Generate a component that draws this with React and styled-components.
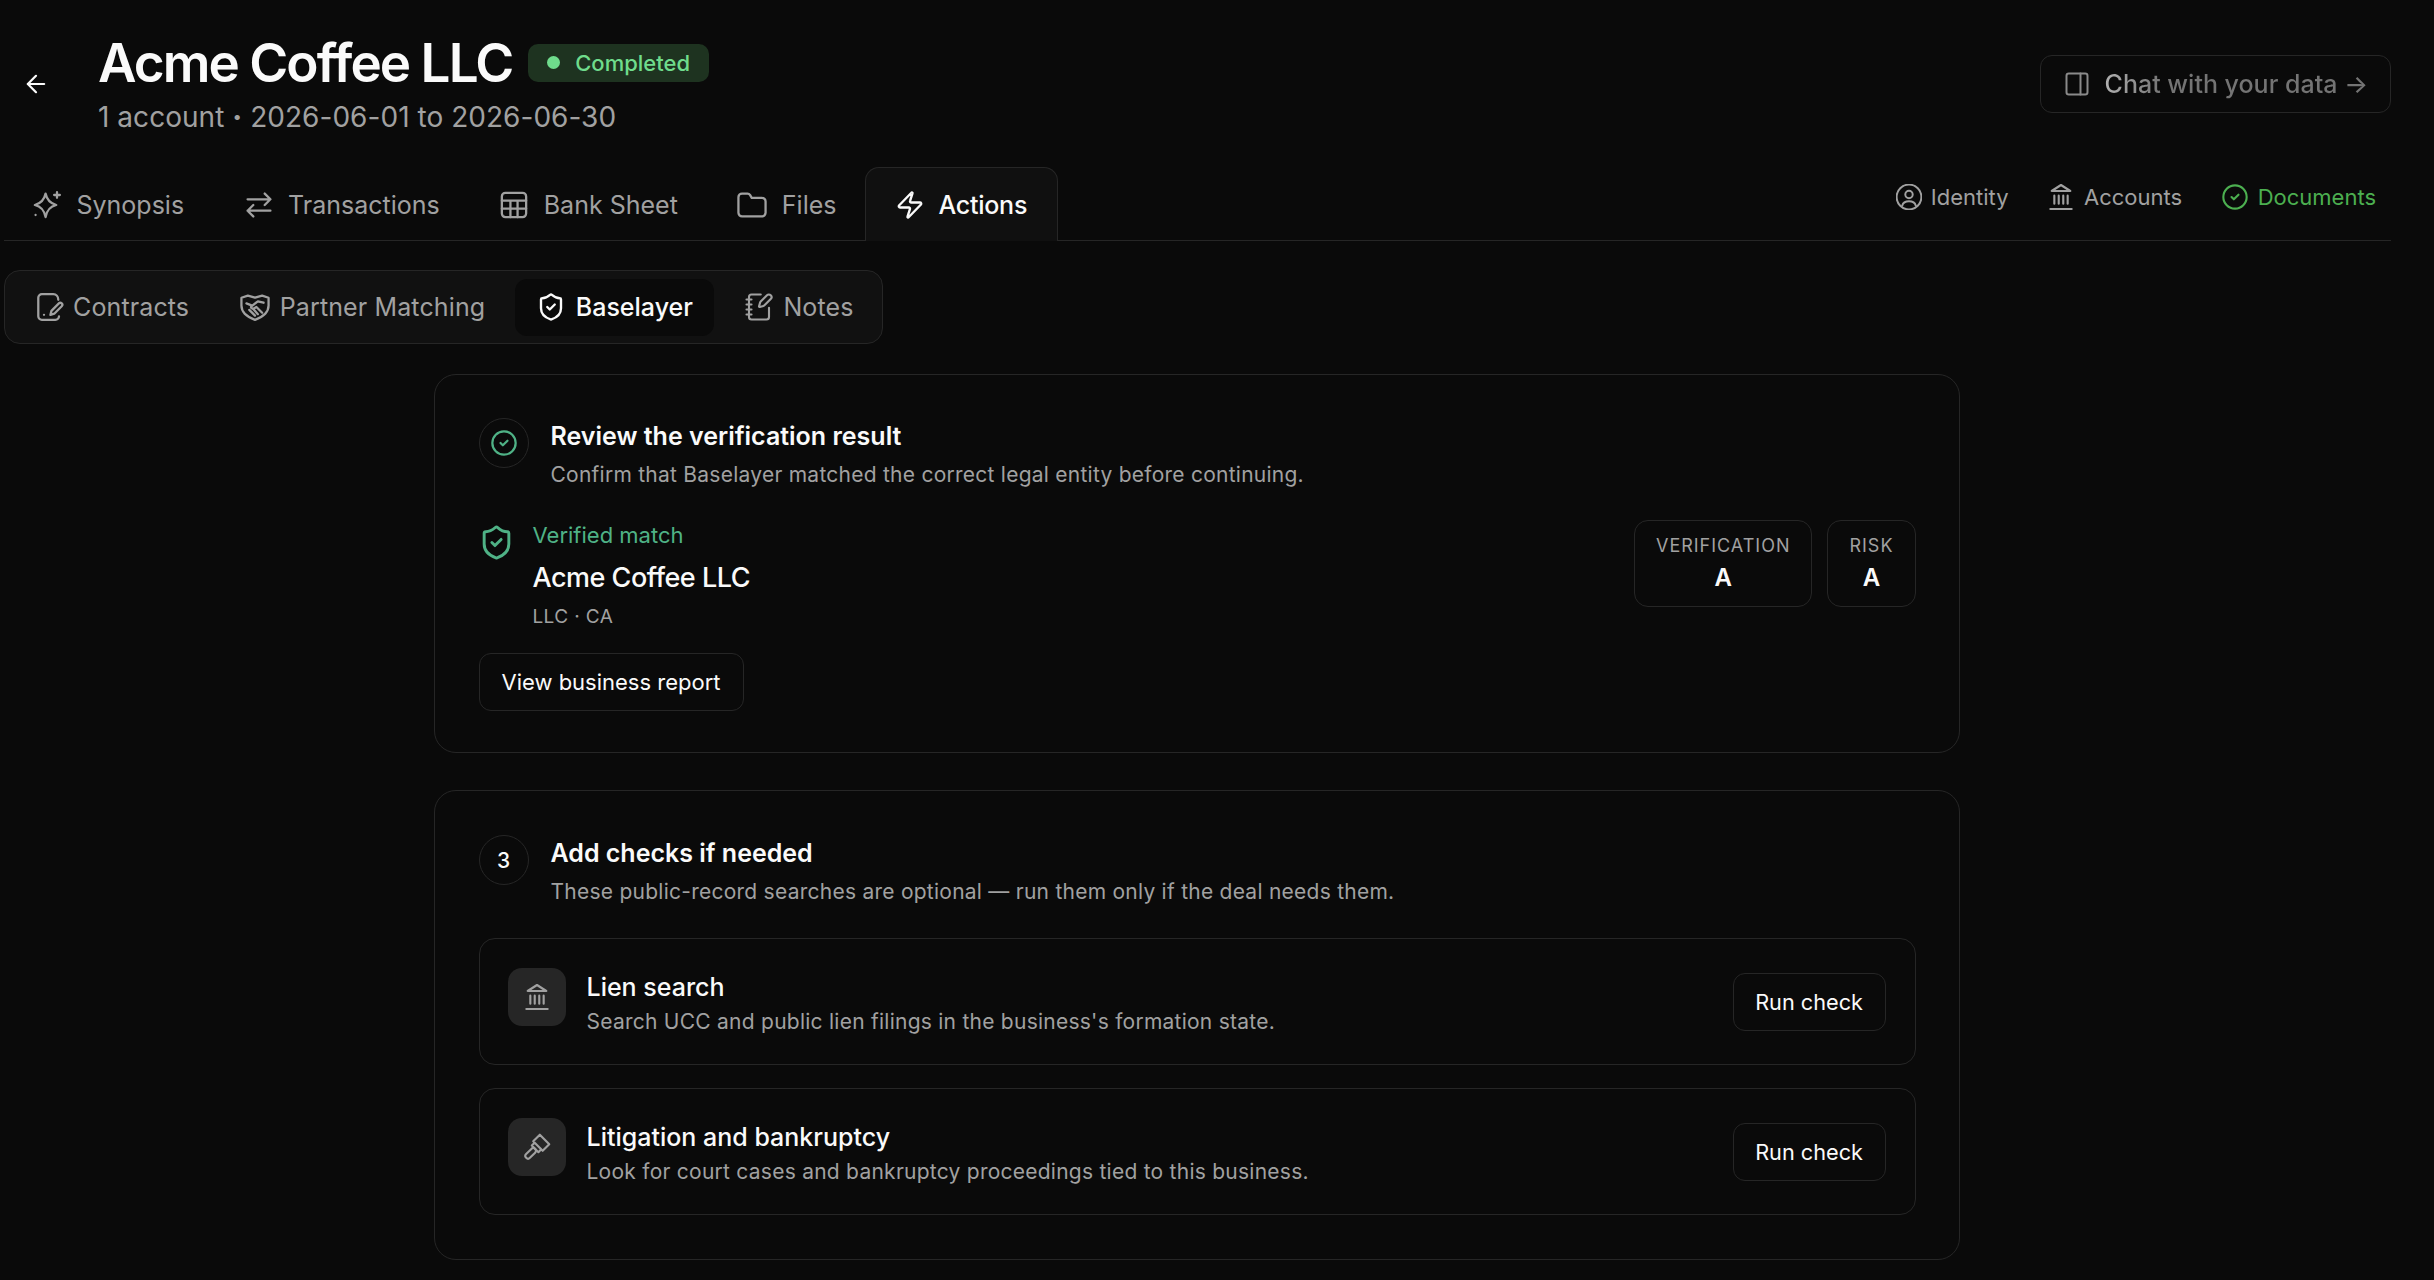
import React from 'react';
import styled, { createGlobalStyle } from 'styled-components';
import { ArrowLeft, Zap, PanelRight, NotebookPen, ShieldCheck, CircleCheck } from 'lucide-react';

const GlobalStyle = createGlobalStyle`
  html, body {
    margin: 0;
    background: #0a0a0a;
    color: #fafafa;
    font-family: Inter, "Noto Sans", sans-serif;
  }
  * { box-sizing: border-box; }
`;

const Svg = styled.svg`
  flex: none;
  fill: none;
  stroke: currentColor;
  stroke-width: 1.6;
  stroke-linecap: round;
  stroke-linejoin: round;
`;

const Icon = ({ size = 30, children }) => (
  <Svg width={size} height={size} viewBox="1.5 1.5 21 21">{children}</Svg>
);

const SparkIcon = (p) => (
  <Icon {...p}>
    <path d="M11 4c.9 4.4 3 6.9 7.5 8-4.5 1-6.6 3.5-7.5 8.5-.9-5-3-7.5-7.5-8.5 4.5-1.1 6.6-3.6 7.5-8z" />
    <path d="M19 3v4M17 5h4M4 19h.01" />
  </Icon>
);
const SwapIcon = (p) => (
  <Icon {...p}>
    <path d="M4 8h16M16 4l4 4-4 4M20 16H4M8 12l-4 4 4 4" />
  </Icon>
);
const TableIcon = (p) => (
  <Icon {...p}>
    <rect x="3.5" y="3.5" width="17" height="17" rx="2.5" />
    <path d="M3.5 9h17M3.5 14.5h17M9.5 9v11.5M14.5 9v11.5" />
  </Icon>
);
const FolderIcon = (p) => (
  <Icon {...p}>
    <path d="M2.5 6.5A2.5 2.5 0 0 1 5 4h3.9c.7 0 1.3.3 1.7.9L11.8 7H19a2.5 2.5 0 0 1 2.5 2.5v8A2.5 2.5 0 0 1 19 20H5a2.5 2.5 0 0 1-2.5-2.5z" />
  </Icon>
);
const ContractIcon = (p) => (
  <Icon {...p}>
    <path d="M15 3H7a2.5 2.5 0 0 0-2.5 2.5v13A2.5 2.5 0 0 0 7 21h9.5a2.5 2.5 0 0 0 2.5-2.5M15 3c2 0 3.5 1.5 3.5 4" />
    <path d="M13 17.5l.7-2.8 5.2-5.2a1.4 1.4 0 0 1 2 2l-5.2 5.2zM8.5 17.5h.01" />
  </Icon>
);
const HandshakeIcon = (p) => (
  <Icon {...p}>
    <path d="M2.5 5.5L7 4l5 1.5L17 4l4.5 1.500V11c0 4.500-4 8-9.500 10C6.500 19 2.500 15.500 2.500 11z" />
    <path d="M6 9.500l4 1.500M18 9l-4-1-4.500 3.500c-.8 1 .5 2.200 1.700 1.500L13 12l4 4M8 14l4 4M10.500 13l3.500 4" />
  </Icon>
);
const UserIcon = (p) => (
  <Icon {...p}>
    <circle cx="12" cy="12" r="10" />
    <circle cx="12" cy="10" r="3" />
    <path d="M6.5 19c.6-2.2 2.8-3.5 5.5-3.5s4.9 1.3 5.5 3.5" />
  </Icon>
);
const BankIcon = (p) => (
  <Icon {...p}>
    <path d="M12 3L5 7.5h14zM7 11v6M10.3 11v6M13.7 11v6M17 11v6M4 21h16" />
  </Icon>
);
const GavelIcon = (p) => (
  <Icon {...p}>
    <g transform="rotate(45 12 12)">
      <rect x="10" y="14" width="4" height="9.5" rx="2" />
      <path d="M8.5 14h7v-3h-7zM7 11h10V4H7z" />
    </g>
  </Icon>
);

const Page = styled.div`
  width: 2434px;
  height: 1280px;
  overflow: hidden;
  padding: 0 45px 0 4px;
`;

const Header = styled.header`
  display: flex;
  align-items: center;
  height: 167px;
  padding: 0 0 0 18px;
`;

const Back = styled.div`
  display: flex;
  width: 76px;
  color: #fafafa;
`;

const TitleBlock = styled.div`
  flex: 1;
  display: flex;
  flex-direction: column;
  gap: 4px;
`;

const TitleRow = styled.div`
  display: flex;
  align-items: center;
  gap: 16px;
`;

const Title = styled.h1`
  margin: 0;
  font-size: 53px;
  line-height: 62px;
  font-weight: 600;
  letter-spacing: -0.037em;
`;

const Badge = styled.span`
  display: inline-flex;
  align-items: center;
  gap: 15px;
  height: 38px;
  padding: 0 19px;
  border-radius: 10px;
  background: #1e3320;
  color: #6fdc8c;
  font-size: 22px;
  font-weight: 500;
`;

const Dot = styled.i`
  width: 13px;
  height: 13px;
  border-radius: 50%;
  background: #6fdc8c;
`;

const Subtitle = styled.div`
  font-size: 28px;
  line-height: 38px;
  letter-spacing: 0.04px;
  color: #a1a1a1;
`;

const Separator = styled.span`
  font-weight: 800;
`;

const ChatButton = styled.div`
  display: flex;
  align-items: center;
  gap: 14px;
  height: 58px;
  margin-right: -2px;
  padding: 0 22px;
  border: 1px solid #262626;
  border-radius: 12px;
  color: #8a8a8a;
`;

const ChatText = styled.span`
  font-size: 25px;
  font-weight: 500;
  background: linear-gradient(90deg, #b0b0b0 0%, #747474 22%, #747474 100%);
  -webkit-background-clip: text;
  background-clip: text;
  color: transparent;
`;

const TabBar = styled.nav`
  display: flex;
  align-items: stretch;
  height: 74px;
  margin-right: -2px;
  border-bottom: 1px solid #262626;
`;

const TabList = styled.div`
  display: flex;
  align-items: stretch;
  margin-left: -1px;
`;

const Tab = styled.div`
  display: flex;
  align-items: center;
  gap: 14.5px;
  padding: 0 29.5px 0 28px;
  margin-bottom: -1px;
  font-size: 25px;
  color: #a1a1a1;
  border: 1px solid transparent;
  border-bottom: 0;
  border-radius: 14px 14px 0 0;
`;

const ActiveTab = styled(Tab)`
  gap: 13px;
  padding: 0 29.5px;
  margin-left: -2px;
  font-weight: 500;
  letter-spacing: -0.01em;
  color: #fafafa;
  border-color: #262626;
  background: #101010;
`;

const Links = styled.div`
  display: flex;
  align-items: flex-start;
  gap: 38.5px;
  margin-left: auto;
  padding: 16px 15px 0 0;
`;

const LinkItem = styled.div`
  display: flex;
  align-items: center;
  gap: 9px;
  font-size: 22px;
  line-height: 28px;
  color: ${(p) => (p.$done ? '#4caf50' : '#a1a1a1')};
`;

const SubBar = styled.div`
  display: flex;
  width: fit-content;
  align-items: center;
  gap: 8px;
  height: 74px;
  margin-top: 29px;
  padding: 0 7px;
  background: #111111;
  border: 1px solid #262626;
  border-radius: 16px;
`;

const SubTab = styled.div`
  display: flex;
  align-items: center;
  gap: 9.5px;
  height: 57px;
  padding: 0 21.5px;
  border-radius: 12px;
  font-size: 25px;
  letter-spacing: 0.005em;
  color: #a1a1a1;
`;

const ActiveSubTab = styled(SubTab)`
  letter-spacing: 0;
  font-weight: 500;
  color: #fafafa;
  background: #0a0a0a;
`;

const Main = styled.main`
  display: flex;
  flex-direction: column;
  align-items: center;
  gap: 37px;
  margin-top: 30px;
`;

const Card = styled.section`
  width: 1526px;
  padding: ${(p) => p.$top}px 43px ${(p) => p.$bottom}px 44px;
  border: 1px solid #262626;
  border-radius: 22px;
`;

const SectionHead = styled.div`
  display: flex;
  gap: 22px;
`;

const StepCircle = styled.div`
  display: flex;
  flex: none;
  align-items: center;
  justify-content: center;
  width: 50px;
  height: 50px;
  border: 1px solid #262626;
  border-radius: 50%;
  color: #4fb286;
`;

const StepNum = styled.span`
  color: #fafafa;
  font-size: 21px;
  font-weight: 500;
`;

const SectionText = styled.div`
  padding-top: 1px;
`;

const SectionTitle = styled.h3`
  margin: 0;
  font-size: 25px;
  line-height: 34px;
  font-weight: 600;
`;

const SectionDesc = styled.p`
  margin: 6px 0 0;
  font-size: 21px;
  line-height: 32px;
  letter-spacing: 0.25px;
  color: #a1a1a1;
`;

const ResultRow = styled.div`
  display: flex;
  align-items: flex-start;
  justify-content: space-between;
  margin-top: 29px;
`;

const Match = styled.div`
  display: flex;
  gap: 18px;
  color: #4fb286;
  & > svg {
    margin: 4px 0 0 -1px;
  }
`;

const MatchLabel = styled.div`
  font-size: 22px;
  line-height: 30px;
  color: #4fb286;
`;

const MatchName = styled.div`
  margin-top: 10px;
  font-size: 27px;
  line-height: 36px;
  font-weight: 500;
  letter-spacing: -0.018em;
  color: #fafafa;
`;

const MatchMeta = styled.div`
  margin-top: 7px;
  font-size: 19px;
  line-height: 28px;
  letter-spacing: 0.02em;
  color: #a1a1a1;
`;

const Scores = styled.div`
  display: flex;
  gap: 15px;
`;

const Score = styled.div`
  display: flex;
  flex-direction: column;
  align-items: center;
  height: 87px;
  padding: 13px 21px 0;
  border: 1px solid #262626;
  border-radius: 14px;
`;

const ScoreLabel = styled.span`
  font-size: 18px;
  line-height: 24px;
  letter-spacing: 0.055em;
  color: #a1a1a1;
`;

const ScoreValue = styled.span`
  margin-top: 4px;
  font-size: 24px;
  line-height: 32px;
  font-weight: 600;
`;

const Button = styled.div`
  display: inline-flex;
  align-items: center;
  flex: none;
  height: 58px;
  padding: 0 21.5px;
  border: 1px solid #262626;
  border-radius: 12px;
  font-size: 21.7px;
  font-weight: 400;
  color: #fafafa;
  background: #0a0a0a;
`;

const ReportButton = styled(Button)`
  margin-top: 22px;
  padding: 0 22px;
  font-size: 22px;
`;

const Checks = styled.div`
  display: flex;
  flex-direction: column;
  gap: 23px;
  margin-top: 30px;
`;

const CheckRow = styled.div`
  display: flex;
  align-items: center;
  height: 127px;
  padding: 0 29px;
  border: 1px solid #262626;
  border-radius: 16px;
`;

const CheckIcon = styled.div`
  display: flex;
  flex: none;
  align-items: center;
  justify-content: center;
  align-self: flex-start;
  width: 58px;
  height: 58px;
  margin: 29px 21px 0 -1px;
  border-radius: 14px;
  background: #262626;
  color: #a1a1a1;
`;

const CheckText = styled.div`
  flex: 1;
  margin-top: 4px;
`;

const CheckTitle = styled.div`
  font-size: 25px;
  line-height: 34px;
  font-weight: 500;
`;

const CheckDesc = styled.div`
  margin-top: 2px;
  font-size: 21px;
  line-height: 32px;
  letter-spacing: 0.25px;
  color: #a1a1a1;
`;

const tabs = [
  { label: 'Synopsis', icon: <SparkIcon /> },
  { label: 'Transactions', icon: <SwapIcon /> },
  { label: 'Bank Sheet', icon: <TableIcon /> },
  { label: 'Files', icon: <FolderIcon /> },
];

const subTabs = [
  { label: 'Contracts', icon: <ContractIcon /> },
  { label: 'Partner Matching', icon: <HandshakeIcon /> },
];

const checks = [
  {
    title: 'Lien search',
    desc: "Search UCC and public lien filings in the business's formation state.",
    icon: <BankIcon size={28} />,
  },
  {
    title: 'Litigation and bankruptcy',
    desc: 'Look for court cases and bankruptcy proceedings tied to this business.',
    icon: <GavelIcon size={28} />,
  },
];

const App = () => {
  return (
    <Page>
      <GlobalStyle />
      <Header>
        <Back><ArrowLeft size={28} strokeWidth={1.9} /></Back>
        <TitleBlock>
          <TitleRow>
            <Title>Acme Coffee LLC</Title>
            <Badge><Dot />Completed</Badge>
          </TitleRow>
          <Subtitle>1 account <Separator>·</Separator> 2026-06-01 to 2026-06-30</Subtitle>
        </TitleBlock>
        <ChatButton>
          <PanelRight size={28} strokeWidth={1.7} />
          <ChatText>Chat with your data →</ChatText>
        </ChatButton>
      </Header>

      <TabBar>
        <TabList>
          {tabs.map((tab) => (
            <Tab key={tab.label}>{tab.icon}{tab.label}</Tab>
          ))}
          <ActiveTab><Zap size={30} strokeWidth={1.9} />Actions</ActiveTab>
        </TabList>
        <Links>
          <LinkItem><UserIcon size={26} />Identity</LinkItem>
          <LinkItem><BankIcon size={28} />Accounts</LinkItem>
          <LinkItem $done><CircleCheck size={28} strokeWidth={1.8} />Documents</LinkItem>
        </Links>
      </TabBar>

      <SubBar>
        {subTabs.map((tab) => (
          <SubTab key={tab.label}>{tab.icon}{tab.label}</SubTab>
        ))}
        <ActiveSubTab><ShieldCheck size={30} strokeWidth={1.9} />Baselayer</ActiveSubTab>
        <SubTab><NotebookPen size={30} strokeWidth={1.7} />Notes</SubTab>
      </SubBar>

      <Main>
        <Card $top={43} $bottom={41}>
          <SectionHead>
            <StepCircle><CircleCheck size={28} strokeWidth={1.9} /></StepCircle>
            <SectionText>
              <SectionTitle>Review the verification result</SectionTitle>
              <SectionDesc>Confirm that Baselayer matched the correct legal entity before continuing.</SectionDesc>
            </SectionText>
          </SectionHead>
          <ResultRow>
            <Match>
              <ShieldCheck size={37} strokeWidth={1.9} />
              <div>
                <MatchLabel>Verified match</MatchLabel>
                <MatchName>Acme Coffee LLC</MatchName>
                <MatchMeta>LLC · CA</MatchMeta>
              </div>
            </Match>
            <Scores>
              <Score><ScoreLabel>VERIFICATION</ScoreLabel><ScoreValue>A</ScoreValue></Score>
              <Score><ScoreLabel>RISK</ScoreLabel><ScoreValue>A</ScoreValue></Score>
            </Scores>
          </ResultRow>
          <ReportButton>View business report</ReportButton>
        </Card>

        <Card $top={44} $bottom={44}>
          <SectionHead>
            <StepCircle><StepNum>3</StepNum></StepCircle>
            <SectionText>
              <SectionTitle>Add checks if needed</SectionTitle>
              <SectionDesc>These public-record searches are optional — run them only if the deal needs them.</SectionDesc>
            </SectionText>
          </SectionHead>
          <Checks>
            {checks.map((check) => (
              <CheckRow key={check.title}>
                <CheckIcon>{check.icon}</CheckIcon>
                <CheckText>
                  <CheckTitle>{check.title}</CheckTitle>
                  <CheckDesc>{check.desc}</CheckDesc>
                </CheckText>
                <Button>Run check</Button>
              </CheckRow>
            ))}
          </Checks>
        </Card>
      </Main>
    </Page>
  );
};

export default App;
